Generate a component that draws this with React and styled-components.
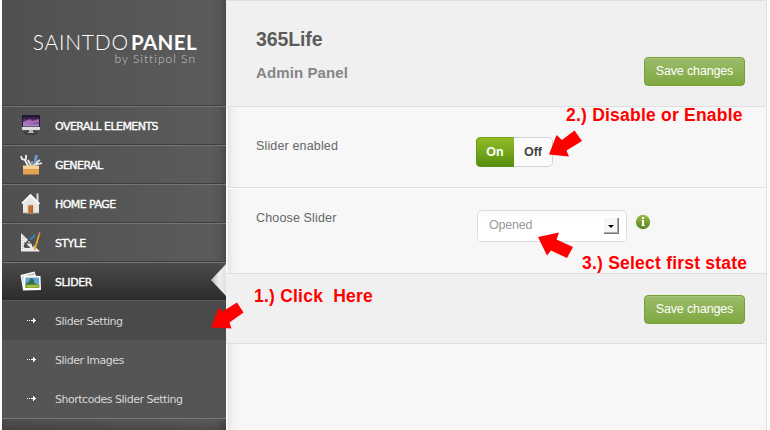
import React from 'react';
import styled, { createGlobalStyle } from 'styled-components';

const GlobalStyle = createGlobalStyle`
  * { box-sizing: border-box; }
  body { margin: 0; background: #fff; overflow: hidden; }
`;

const Page = styled.div`
  position: relative;
  display: flex;
  width: 770px;
  height: 430px;
  padding-left: 2px;
  overflow: hidden;
  font-family: 'Liberation Sans', Arial, sans-serif;
`;

const Sidebar = styled.aside`
  width: 224px;
  height: 430px;
  flex: none;
  color: #fff;
  background: linear-gradient(90deg, #505050, #5b5b5b 93%, #565656 97%, #494949);
`;

const Brand = styled.div`
  height: 105px;
  padding: 32px 30px 0 29px;
  display: flex;
  flex-direction: column;
  align-items: flex-end;
  font-family: Lato, sans-serif;
`;

const Logo = styled.div`
  display: flex;
  gap: 2px;
  font-size: 21px;
  line-height: 20px;
  font-weight: 300;
  letter-spacing: 0.75px;
  margin-right: -1px;
  white-space: nowrap;
  b { font-size: 20.5px; font-weight: 700; letter-spacing: 0.4px; }
`;

const Byline = styled.div`
  font-size: 12px;
  line-height: 12px;
  font-weight: 300;
  letter-spacing: 1px;
  color: #c8c8c8;
  margin-top: 1px;
`;

const MenuItem = styled.div`
  height: 39px;
  display: flex;
  align-items: center;
  padding-left: 18px;
  gap: 13px;
  border-top: 1px solid #3e3e3e;
  box-shadow: inset 0 1px #757575;
  font: 11px 'DejaVu Sans', Verdana, sans-serif;
  letter-spacing: ${(p) => p.$spacing || '-0.55px'};
  -webkit-text-stroke: 0.35px #fff;
  background: ${(p) => (p.$active ? 'linear-gradient(#4b4b4b, #2c2c2c)' : 'transparent')};
  svg { -webkit-text-stroke: 0; flex: none; margin-top: 2px; }
  span { padding-top: 3px; }
`;

const SubItem = styled.div`
  height: 39px;
  display: flex;
  align-items: center;
  padding-left: 25px;
  gap: 19px;
  font: 11px 'DejaVu Sans', Verdana, sans-serif;
  letter-spacing: -0.48px;
  color: #d8d8d8;
  background: ${(p) => (p.$current ? '#4a4a4a' : '#555')};
  span { padding-top: 2px; }
`;

const SubMenu = styled.div`
  border-top: 1px solid #595959;
  border-bottom: 1px solid #777;
`;

const SidebarEnd = styled.div`
  height: 12px;
  background: linear-gradient(#0000, #0003);
`;

const Main = styled.main`
  width: 541px;
  height: 430px;
  border-right: 1px solid #dfdfdf;
  background: #f7f7f7;
  color: #666;
`;

const Band = styled.section`
  height: ${(p) => p.$height}px;
  display: flex;
  padding-left: 30px;
  border-top: ${(p) => (p.$first ? '1px solid #dfdfdf' : '0')};
  border-bottom: 1px solid #dfdfdf;
  background: ${(p) => (p.$tone === 'plain'
    ? 'linear-gradient(90deg, #fff 1px, #e5e5e5 2px, #f2f2f2 7px, #f7f7f7 13px)'
    : '#f0f0f0')};
  box-shadow: ${(p) => (p.$highlight ? 'inset 0 1px #fff' : 'none')};
`;

const Heading = styled.div`
  flex: 1;
  padding-top: 27px;
`;

const Title = styled.h1`
  margin: 0;
  font-size: 19.5px;
  line-height: 22px;
  letter-spacing: -0.1px;
  color: #5c5c5c;
`;

const Subtitle = styled.h2`
  margin: 14px 0 0;
  font-size: 15px;
  line-height: 18px;
  letter-spacing: 0.1px;
  color: #858585;
`;

const SaveButton = styled.button`
  width: 101px;
  height: 29px;
  margin: ${(p) => p.$top}px 21px 0 auto;
  padding: 0 0 2px;
  border: 1px solid #76a130;
  border-radius: 4px;
  background: linear-gradient(#9bbb6a, #7fa841);
  box-shadow: inset 0 1px #a9c77b;
  color: #fff;
  font: 12.5px 'Liberation Sans', Arial, sans-serif;
  letter-spacing: -0.15px;
  white-space: nowrap;
`;

const Field = styled.div`
  width: ${(p) => p.$width || 220}px;
  padding-top: ${(p) => p.$top}px;
  font-size: 12.5px;
  line-height: 16px;
  letter-spacing: 0.15px;
`;

const Toggle = styled.div`
  display: flex;
  width: 77px;
  height: 30px;
  margin-top: 30px;
  border: 1px solid #d3d3d3;
  border-left: 0;
  border-radius: 5px;
  background: #fbfbfb;
`;

const ToggleOption = styled.div`
  width: 38px;
  height: 30px;
  margin-top: -1px;
  font-size: 12.5px;
  line-height: 30px;
  font-weight: bold;
  text-align: center;
  color: ${(p) => (p.$on ? '#fff' : '#444')};
  background: ${(p) => (p.$on ? 'linear-gradient(#93bd27, #568d0e)' : 'transparent')};
  border-radius: 5px 0 0 5px;
  box-shadow: ${(p) => (p.$on ? 'inset 0 1px #78a51d, inset 1px 0 #68961e, inset 0 -1px #5a8c18' : 'none')};
`;

const SelectBox = styled.div`
  display: flex;
  justify-content: space-between;
  width: 150px;
  height: 32px;
  margin: 22px 0 0;
  padding: 7px 7px 0 11px;
  border: 1px solid #ddd;
  border-radius: 5px;
  background: linear-gradient(#f9f9f9, #fff 6px);
  font-size: 12.5px;
  line-height: 14px;
  letter-spacing: -0.2px;
  color: #999;
`;

const DropButton = styled.div`
  width: 15px;
  height: 16px;
  padding: 7px 0 0 4px;
  border-right: 1px solid #777;
  border-bottom: 1px solid #777;
  background: #f6f6f6;
  box-shadow: inset -1px -1px #aaa;
  svg { display: block; }
`;

const InfoBadge = styled.svg`
  margin: 26px 0 0 8px;
`;

const Overlay = styled.svg`
  position: absolute;
  left: 0;
  top: 0;
`;

const Note = styled.div`
  position: absolute;
  left: ${(p) => p.$x}px;
  top: ${(p) => p.$y}px;
  color: #f00;
  font-size: 17.5px;
  line-height: 20px;
  font-weight: bold;
  letter-spacing: 0.22px;
  white-space: pre;
`;

const MonitorIcon = () => (
  <svg width="22" height="24" viewBox="0 0 22 24">
    <defs>
      <linearGradient id="screen" x2="0" y2="1">
        <stop stopColor="#17152b" /><stop offset=".6" stopColor="#7a3c93" /><stop offset="1" stopColor="#b99ad0" />
      </linearGradient>
    </defs>
    <ellipse cx="11" cy="19" rx="7" ry="2" fill="#333" opacity=".7" />
    <rect x="2" y="1" width="18" height="15" rx=".7" fill="#dedede" />
    <rect x="2" y="1" width="18" height="12" fill="#1b1a27" />
    <rect x="3" y="2" width="16" height="10.500" fill="url(#screen)" />
    <path d="M3 8l7-3 2 2 7-2v3l-6 1-6 1-4 1z" fill="#d890dc" opacity=".55" />
    <path d="M9 16h4v2l2 1H7l2-1z" fill="#b5b5b5" />
  </svg>
);

const ToolboxIcon = () => (
  <svg width="22" height="24" viewBox="0 0 22 24">
    <path d="M1 3l1 3 3 1 3 6M6 2v4L4 7M8 7l3 6" stroke="#f0f0f0" strokeWidth="1.8" fill="none" />
    <path d="M15 2h3l-1 5-2 6-2-1 1-5z" fill="#6998c8" />
    <path d="M20 7l-3 2 1 2 4-1M17 10l-4 3" stroke="#e6e6e6" strokeWidth="1.8" fill="none" />
    <path d="M8 9l2 4M12 8v5" stroke="#aaa" strokeWidth="1.5" />
    <path d="M3 13h16v8.500H3z" fill="#e2a451" />
    <path d="M3 12.500h16v4H3z" fill="#f8d391" />
    <path d="M3 16.500h16" stroke="#c99450" strokeWidth=".7" />
  </svg>
);

const HouseIcon = () => (
  <svg width="22" height="24" viewBox="0 0 22 24">
    <path d="M16.500 1.500h2V10l-2-2z" fill="#ddd" />
    <path d="M3 11l8-8 8 8v10H3z" fill="#e8e8e6" />
    <path d="M2 11.500l8.500-8.500 9 9" fill="none" stroke="#fafafa" strokeWidth="1.8" />
    <path d="M3 21h16" stroke="#aaa18f" strokeWidth="1" />
    <path d="M7.500 12.500h6V21.500h-6z" fill="#d8c7ae" />
    <path d="M8.500 13.500h4.500v8H8.500z" fill="#b6632b" />
    <path d="M10.700 14v7" stroke="#df8b46" strokeWidth=".7" />
  </svg>
);

const RulerIcon = () => (
  <svg width="22" height="24" viewBox="0 0 22 24">
    <path fillRule="evenodd" d="M1 2v18.500h19zM4.500 10.500l6 6.500h-6z" fill="#ececec" />
    <path d="M3 6l13 13M2.500 7v11" stroke="#aaa" strokeWidth=".7" strokeDasharray="1 1" />
    <path d="M13 5l-4 4-3 3-2 4M10 8l2 3 1 5M6 12h7" stroke="#3b454d" strokeWidth="1.2" fill="none" />
    <path d="M14.500 3l-5 5 1 1.500 5-4z" fill="#3783b6" />
    <path d="M18.500 3l1.500.5-4 14-2 2.500v-3z" fill="#e7a72f" />
    <path d="M19 1l1.500.5-.5 2-1.500-.5z" fill="#c98a6e" />
  </svg>
);

const PhotosIcon = () => (
  <svg width="22" height="24" viewBox="0 0 22 24">
    <path d="M.500 5l14-3.500L20 18 3 20z" fill="#fff" />
    <path d="M2 6l12-3 1 2-11 2 1 11-1 1z" fill="#bdc4ba" />
    <path d="M3.500 5.500l17 .5.500 14-18 .500z" fill="#fff" />
    <path d="M5.500 7.500h13.500l.4 10.500H5z" fill="#62a6d3" />
    <path d="M5.200 14.500q6-2 14 0V18H5z" fill="#8da735" />
    <path d="M6 13.500l3-2 1-2.500 2-1 2 2v2.500l3 2H6z" fill="#317150" />
    <path d="M7 16.500l11-.5" stroke="#bfd14f" />
  </svg>
);

const DottedArrow = () => (
  <svg width="9" height="7" viewBox="0 0 9 7" shapeRendering="crispEdges">
    <path d="M0 3h1v1H0zM2 3h1v1H2zM4 3h5v1H4zM6 1h1v5H6zM7 2h1v3H7z" fill="#fff" />
  </svg>
);

const menu = [
  { label: 'OVERALL ELEMENTS', Icon: MonitorIcon },
  { label: 'GENERAL', Icon: ToolboxIcon },
  { label: 'HOME PAGE', Icon: HouseIcon },
  { label: 'STYLE', Icon: RulerIcon },
  { label: 'SLIDER', Icon: PhotosIcon, active: true, spacing: '-0.4px' },
];

export default function App() {
  return (
    <>
      <GlobalStyle />
      <Page>
        <Sidebar>
          <Brand>
            <Logo><span>SAINTDO</span><b>PANEL</b></Logo>
            <Byline>by Sittipol Sn</Byline>
          </Brand>
          {menu.map(({ label, Icon, active, spacing }) => (
            <MenuItem key={label} $active={active} $spacing={spacing}>
              <Icon /><span>{label}</span>
            </MenuItem>
          ))}
          <SubMenu>
            <SubItem $current><DottedArrow /><span>Slider Setting</span></SubItem>
            <SubItem><DottedArrow /><span>Slider Images</span></SubItem>
            <SubItem><DottedArrow /><span>Shortcodes Slider Setting</span></SubItem>
          </SubMenu>
          <SidebarEnd />
        </Sidebar>
        <Main>
          <Band $height={107} $tone="tinted" $first>
            <Heading>
              <Title>365Life</Title>
              <Subtitle>Admin Panel</Subtitle>
            </Heading>
            <SaveButton $top={56}>Save changes</SaveButton>
          </Band>
          <Band $height={81} $tone="plain">
            <Field $top={31}>Slider enabled</Field>
            <Toggle>
              <ToggleOption $on>On</ToggleOption>
              <ToggleOption>Off</ToggleOption>
            </Toggle>
          </Band>
          <Band $height={86} $tone="plain" $highlight>
            <Field $top={22} $width={221}>Choose Slider</Field>
            <SelectBox>
              Opened
              <DropButton>
                <svg width="6" height="3"><path d="M0 0h6L3 3z" fill="#000" /></svg>
              </DropButton>
            </SelectBox>
            <InfoBadge width="16" height="16" viewBox="0 0 16 16">
              <defs><linearGradient id="info" x2="0" y2="1"><stop stopColor="#9abb4e" /><stop offset="1" stopColor="#55851c" /></linearGradient></defs>
              <circle cx="8" cy="8" r="7.2" fill="url(#info)" />
              <path d="M7 3h2v2H7zM6.5 6H9v5h1v1H6.5v-1H7V7h-.5z" fill="#fff" />
            </InfoBadge>
          </Band>
          <Band $height={70} $tone="tinted">
            <SaveButton $top={21}>Save changes</SaveButton>
          </Band>
          <Band $height={100} $tone="plain" />
        </Main>
        <Overlay width="770" height="430" viewBox="0 0 770 430">
          <defs>
            <linearGradient id="notch"><stop stopColor="#bdbdbd" /><stop offset=".55" stopColor="#eee" /><stop offset="1" stopColor="#e2e2e2" /></linearGradient>
          </defs>
          <path d="M226 264l-15 16 15 16z" fill="url(#notch)" />
          <path d="M237 302.500L243.500 312.500L229.500 322.500L231.500 328.500L211 327.500L218.500 307.500L222.500 311.500Z" fill="#f00" />
          <path d="M574.500 130.500L582 141L566.500 150.500L569 156.500L549 154.500L556.500 135L562 140Z" fill="#f00" />
          <path d="M538 237L559 232.500L556.500 239.500L573 247L567 258L551 250.500L547 255.500Z" fill="#f00" />
        </Overlay>
        <Note $x={254} $y={286}>1.) Click  Here</Note>
        <Note $x={566} $y={105}>2.) Disable or Enable</Note>
        <Note $x={582} $y={253}>3.) Select first state</Note>
      </Page>
    </>
  );
}
